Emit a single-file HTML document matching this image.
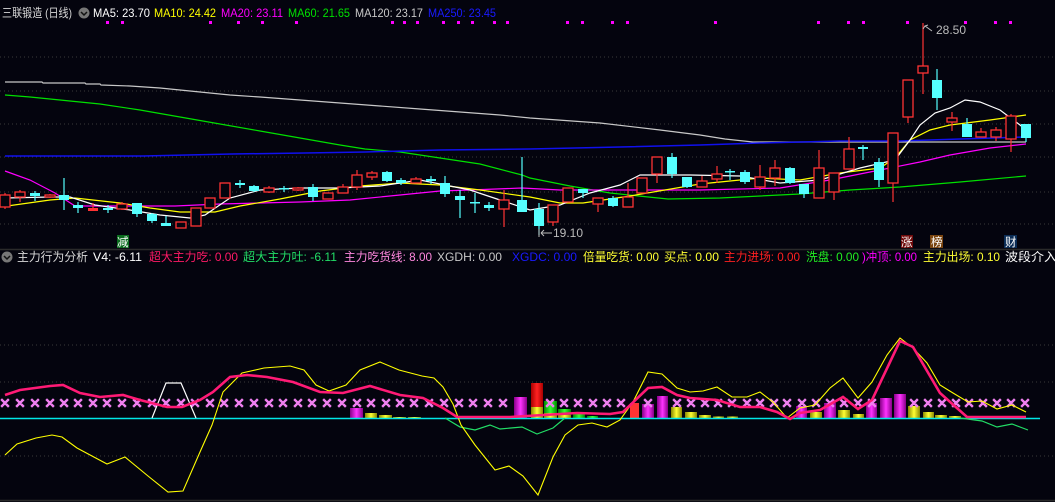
<!DOCTYPE html>
<html><head><meta charset="utf-8"><style>
html,body{margin:0;padding:0;background:#04040e;}
svg{display:block}
text{font-family:"Liberation Sans","Noto Sans CJK SC",sans-serif;font-size:12px}
</style></head><body>
<svg width="1055" height="502" viewBox="0 0 1055 502" xmlns="http://www.w3.org/2000/svg">
<rect width="1055" height="502" fill="#04040e"/>
<!-- grid -->
<g stroke="#3a3a3a" stroke-dasharray="1,3" stroke-width="1">
<line x1="0" y1="57" x2="1055" y2="57"/><line x1="0" y1="91" x2="1055" y2="91"/><line x1="0" y1="124" x2="1055" y2="124"/>
<line x1="0" y1="157" x2="1055" y2="157"/><line x1="0" y1="192" x2="1055" y2="192"/><line x1="0" y1="224" x2="1055" y2="224"/>
<line x1="0" y1="345" x2="1055" y2="345"/><line x1="0" y1="382" x2="1055" y2="382"/><line x1="0" y1="456" x2="1055" y2="456"/>
</g>
<line x1="0" y1="249.5" x2="1055" y2="249.5" stroke="#2a2a2a" stroke-width="1.5"/>
<line x1="0" y1="500.5" x2="1055" y2="500.5" stroke="#2a2a2a" stroke-width="1.5"/>

<!-- header -->
<text x="2" y="17" fill="#d8d8d8" textLength="70" lengthAdjust="spacingAndGlyphs">三联锻造 (日线)</text>
<circle cx="84" cy="13" r="5.5" fill="#777"/><path d="M81 12 L84 15 L87 12" stroke="#111" stroke-width="1.5" fill="none"/>
<text x="93" y="17" fill="#ffffff" textLength="57" lengthAdjust="spacingAndGlyphs">MA5: 23.70</text>
<text x="154" y="17" fill="#ffff00" textLength="62" lengthAdjust="spacingAndGlyphs">MA10: 24.42</text>
<text x="221" y="17" fill="#ff00ff" textLength="62" lengthAdjust="spacingAndGlyphs">MA20: 23.11</text>
<text x="288" y="17" fill="#00e000" textLength="62" lengthAdjust="spacingAndGlyphs">MA60: 21.65</text>
<text x="355" y="17" fill="#c8c8c8" textLength="68" lengthAdjust="spacingAndGlyphs">MA120: 23.17</text>
<text x="428" y="17" fill="#1a1aff" textLength="68" lengthAdjust="spacingAndGlyphs">MA250: 23.45</text>

<!-- magenta dots -->
<g fill="#ff00ff">
<rect x="106" y="21" width="3" height="3"/><rect x="121" y="21" width="3" height="3"/><rect x="209" y="21" width="3" height="3"/><rect x="237" y="21" width="3" height="3"/><rect x="261" y="21" width="3" height="3"/><rect x="295" y="21" width="3" height="3"/><rect x="391" y="21" width="3" height="3"/><rect x="403" y="21" width="3" height="3"/><rect x="416" y="21" width="3" height="3"/><rect x="442" y="21" width="3" height="3"/><rect x="457" y="21" width="3" height="3"/><rect x="471" y="21" width="3" height="3"/><rect x="493" y="21" width="3" height="3"/><rect x="506" y="21" width="3" height="3"/><rect x="566" y="21" width="3" height="3"/><rect x="581" y="21" width="3" height="3"/><rect x="611" y="21" width="3" height="3"/><rect x="626" y="21" width="3" height="3"/><rect x="714" y="21" width="3" height="3"/><rect x="817" y="21" width="3" height="3"/><rect x="847" y="21" width="3" height="3"/><rect x="862" y="21" width="3" height="3"/><rect x="906" y="21" width="3" height="3"/><rect x="964" y="21" width="3" height="3"/><rect x="994" y="21" width="3" height="3"/><rect x="1009" y="21" width="3" height="3"/>
</g>

<!-- MA lines -->
<g fill="none" stroke-width="1.2">
<polyline stroke="#c8c8c8" points="5,82 42,82 43,83 85,83 86,84 100,84 101,85 130,86 160,88 180,90 200,92 230,95 260,97 300,100 340,103 380,106 420,109 460,112 500,115 530,118 600,123 660,130 700,135 725,139 753,142 1026,142"/>
<polyline stroke="#00e000" points="5,95 30,97 60,100 100,104 140,110 180,117 220,124 260,131 300,138 340,145 365,149 400,152 440,158 480,164 522,175 530,178 570,186 610,193 668,199 720,198 800,194 850,190 900,187 960,182 1026,176"/>
<polyline stroke="#1010ee" stroke-width="1.5" points="5,156 143,156 232,154 305,153 365,152 440,150 530,149 620,147 700,145 760,143 840,141 900,141 960,139 1026,137"/>
<polyline stroke="#ff00ff" points="5,171 30,180 55,193 75,206 175,206 220,204 260,203 300,202 350,200 400,195 440,191 470,190 522,188 560,190 620,190 700,190 780,188 830,180 880,170 920,162 950,155 990,148 1026,144"/>
<polyline stroke="#ffff00" points="0,207 50,200 75,198 120,203 150,208 180,212 215,212 240,206 280,199 320,191 360,186 400,183 440,185 480,190 530,197 560,203 583,203 630,196 700,184 760,178 800,180 840,173 880,168 895,158 910,140 930,130 950,125 990,120 1026,115"/>
<polyline stroke="#ffffff" points="5,198 50,197 70,197 95,205 130,210 160,215 190,218 205,215 230,198 260,190 300,188 340,188 380,186 420,180 470,190 500,200 530,210 560,205 590,193 620,185 640,175 690,175 740,176 780,183 820,180 860,168 895,160 910,140 920,125 935,113 950,108 965,100 980,102 1000,110 1020,125 1026,130"/>
</g>

<!-- candles: wicks -->
<g stroke-width="1.2">
<g stroke="#ff3333">
<line x1="5" y1="193" x2="5" y2="209"/><line x1="20" y1="190" x2="20" y2="202"/><line x1="50" y1="194" x2="50" y2="198"/><line x1="93" y1="203" x2="93" y2="211"/><line x1="122" y1="202" x2="122" y2="210"/><line x1="269" y1="186" x2="269" y2="193"/><line x1="298" y1="187" x2="298" y2="191"/><line x1="343" y1="184" x2="343" y2="193"/><line x1="357" y1="170" x2="357" y2="190"/><line x1="372" y1="171" x2="372" y2="180"/><line x1="416" y1="177" x2="416" y2="183"/><line x1="504" y1="190" x2="504" y2="227"/><line x1="553" y1="205" x2="553" y2="226"/><line x1="598" y1="198" x2="598" y2="212"/><line x1="628" y1="183" x2="628" y2="207"/><line x1="657" y1="157" x2="657" y2="183"/><line x1="702" y1="176" x2="702" y2="187"/><line x1="717" y1="166" x2="717" y2="183"/><line x1="760" y1="165" x2="760" y2="190"/><line x1="775" y1="160" x2="775" y2="186"/><line x1="819" y1="150" x2="819" y2="198"/><line x1="834" y1="173" x2="834" y2="200"/><line x1="849" y1="137" x2="849" y2="169"/><line x1="893" y1="133" x2="893" y2="202"/><line x1="908" y1="80" x2="908" y2="123"/><line x1="923" y1="23" x2="923" y2="94"/><line x1="952" y1="112" x2="952" y2="131"/><line x1="981" y1="128" x2="981" y2="137"/><line x1="996" y1="127" x2="996" y2="141"/><line x1="1011" y1="114" x2="1011" y2="152"/>
</g>
<g stroke="#55ffff">
<line x1="35" y1="191" x2="35" y2="201"/><line x1="64" y1="178" x2="64" y2="210"/><line x1="78" y1="202" x2="78" y2="213"/><line x1="108" y1="205" x2="108" y2="213"/><line x1="137" y1="203" x2="137" y2="217"/><line x1="152" y1="213" x2="152" y2="223"/><line x1="166" y1="216" x2="166" y2="226"/><line x1="240" y1="180" x2="240" y2="188"/><line x1="254" y1="185" x2="254" y2="192"/><line x1="284" y1="186" x2="284" y2="192"/><line x1="313" y1="184" x2="313" y2="201"/><line x1="387" y1="171" x2="387" y2="182"/><line x1="401" y1="178" x2="401" y2="185"/><line x1="431" y1="176" x2="431" y2="184"/><line x1="445" y1="176" x2="445" y2="197"/><line x1="460" y1="190" x2="460" y2="218"/><line x1="475" y1="193" x2="475" y2="213"/><line x1="489" y1="202" x2="489" y2="211"/><line x1="522" y1="157" x2="522" y2="212"/><line x1="539" y1="203" x2="539" y2="235"/><line x1="583" y1="189" x2="583" y2="198"/><line x1="613" y1="196" x2="613" y2="207"/><line x1="672" y1="153" x2="672" y2="178"/><line x1="687" y1="177" x2="687" y2="188"/><line x1="730" y1="169" x2="730" y2="180"/><line x1="745" y1="170" x2="745" y2="184"/><line x1="790" y1="167" x2="790" y2="184"/><line x1="804" y1="184" x2="804" y2="198"/><line x1="863" y1="145" x2="863" y2="160"/><line x1="879" y1="158" x2="879" y2="187"/><line x1="937" y1="69" x2="937" y2="110"/><line x1="967" y1="118" x2="967" y2="137"/><line x1="1026" y1="124" x2="1026" y2="142"/>
</g>
</g>
<!-- candle bodies red hollow -->
<g fill="#04040e" stroke="#ff3333" stroke-width="1.3">
<rect x="0" y="195" width="10" height="12"/><rect x="15" y="192" width="10" height="5"/><rect x="45" y="195" width="10" height="2"/><rect x="117" y="204" width="10" height="5"/><rect x="176" y="222" width="10" height="6"/><rect x="191" y="208" width="10" height="18"/><rect x="205" y="198" width="10" height="10"/><rect x="220" y="183" width="10" height="15"/><rect x="264" y="188" width="10" height="4"/><rect x="293" y="188" width="10" height="2"/><rect x="323" y="193" width="10" height="6"/><rect x="338" y="187" width="10" height="6"/><rect x="352" y="175" width="10" height="12"/><rect x="367" y="173" width="10" height="4"/><rect x="411" y="179" width="10" height="4"/><rect x="499" y="200" width="10" height="9"/><rect x="548" y="205" width="10" height="17"/><rect x="563" y="188" width="10" height="14"/><rect x="593" y="198" width="10" height="6"/><rect x="623" y="197" width="10" height="10"/><rect x="637" y="178" width="10" height="15"/><rect x="652" y="157" width="10" height="17"/><rect x="697" y="181" width="10" height="6"/><rect x="712" y="174" width="10" height="5"/><rect x="755" y="177" width="10" height="10"/><rect x="770" y="168" width="10" height="10"/><rect x="814" y="168" width="10" height="30"/><rect x="829" y="173" width="10" height="19"/><rect x="844" y="149" width="10" height="20"/><rect x="888" y="133" width="10" height="50"/><rect x="903" y="80" width="10" height="37"/><rect x="918" y="66" width="10" height="7"/><rect x="947" y="118" width="10" height="4"/><rect x="976" y="132" width="10" height="5"/><rect x="991" y="130" width="10" height="7"/><rect x="1006" y="116" width="10" height="23"/>
</g>
<rect x="88" y="208" width="10" height="3" fill="#ff3333"/>
<!-- cyan bodies -->
<g fill="#55ffff">
<rect x="30" y="193" width="10" height="3"/><rect x="59" y="195" width="10" height="5"/><rect x="73" y="205" width="10" height="3"/><rect x="103" y="208" width="10" height="2"/><rect x="132" y="203" width="10" height="11"/><rect x="147" y="214" width="10" height="7"/><rect x="161" y="223" width="10" height="3"/><rect x="235" y="183" width="10" height="2"/><rect x="249" y="186" width="10" height="5"/><rect x="279" y="188" width="10" height="1.5"/><rect x="308" y="187" width="10" height="10"/><rect x="382" y="172" width="10" height="9"/><rect x="396" y="180" width="10" height="3"/><rect x="426" y="179" width="10" height="2"/><rect x="440" y="183" width="10" height="11"/><rect x="455" y="196" width="10" height="4"/><rect x="470" y="202" width="10" height="1.5"/><rect x="484" y="205" width="10" height="3"/><rect x="517" y="200" width="10" height="12"/><rect x="534" y="209" width="10" height="17"/><rect x="578" y="189" width="10" height="4"/><rect x="608" y="198" width="10" height="8"/><rect x="667" y="157" width="10" height="17"/><rect x="682" y="177" width="10" height="10"/><rect x="725" y="171" width="10" height="1.5"/><rect x="740" y="172" width="10" height="10"/><rect x="785" y="168" width="10" height="15"/><rect x="799" y="184" width="10" height="10"/><rect x="858" y="147" width="10" height="2"/><rect x="874" y="162" width="10" height="18"/><rect x="932" y="80" width="10" height="18"/><rect x="962" y="124" width="10" height="13"/><rect x="1021" y="124" width="10" height="14"/>
</g>

<!-- price labels -->
<path d="M932 31 L925 26 L923 29 M925 26 L928 25" stroke="#bbb" fill="none" stroke-width="1"/>
<text x="936" y="34" fill="#bbbbbb">28.50</text>
<path d="M552 233 L541 233 M541 233 L544 230 M541 233 L544 236 M539 229 L539 237" stroke="#bbb" fill="none" stroke-width="1"/>
<text x="553" y="237" fill="#bbbbbb">19.10</text>

<!-- markers -->
<rect x="117" y="235" width="12" height="13" fill="#0b6b1e"/><text x="117" y="246" fill="#fff" style="font-size:11.5px">减</text>
<rect x="901" y="235" width="12" height="13" fill="#6e0a0a"/><text x="901" y="246" fill="#fff" style="font-size:11.5px">涨</text>
<rect x="930" y="235" width="13" height="13" fill="#7a4510"/><text x="931" y="246" fill="#fff" style="font-size:11.5px">榜</text>
<rect x="1004" y="235" width="13" height="13" fill="#0a2c55"/><text x="1005" y="246" fill="#fff" style="font-size:11.5px">财</text>

<!-- lower header -->
<circle cx="7" cy="257" r="5.5" fill="#777"/><path d="M4 256 L7 259 L10 256" stroke="#111" stroke-width="1.5" fill="none"/>
<text x="17" y="261" fill="#d8d8d8" textLength="71" lengthAdjust="spacingAndGlyphs">主力行为分析</text>
<text x="93" y="261" fill="#ffffff" textLength="49" lengthAdjust="spacingAndGlyphs">V4: -6.11</text>
<text x="149" y="261" fill="#ff1a66" textLength="89" lengthAdjust="spacingAndGlyphs">超大主力吃: 0.00</text>
<text x="243" y="261" fill="#22dd66" textLength="94" lengthAdjust="spacingAndGlyphs">超大主力吐: -6.11</text>
<text x="344" y="261" fill="#ff88dd" textLength="88" lengthAdjust="spacingAndGlyphs">主力吃货线: 8.00</text>
<text x="437" y="261" fill="#c8c8c8" textLength="65" lengthAdjust="spacingAndGlyphs">XGDH: 0.00</text>
<text x="512" y="261" fill="#1a1aff" textLength="65" lengthAdjust="spacingAndGlyphs">XGDC: 0.00</text>
<text x="583" y="261" fill="#ffff33" textLength="76" lengthAdjust="spacingAndGlyphs">倍量吃货: 0.00</text>
<text x="664" y="261" fill="#ffff33" textLength="55" lengthAdjust="spacingAndGlyphs">买点: 0.00</text>
<text x="724" y="261" fill="#ff2020" textLength="76" lengthAdjust="spacingAndGlyphs">主力进场: 0.00</text>
<text x="806" y="261" fill="#22ee22" textLength="53" lengthAdjust="spacingAndGlyphs">洗盘: 0.00</text>
<text x="862" y="261" fill="#ff00ff" textLength="55" lengthAdjust="spacingAndGlyphs">)冲顶: 0.00</text>
<text x="923" y="261" fill="#ffff33" textLength="77" lengthAdjust="spacingAndGlyphs">主力出场: 0.10</text>
<text x="1005" y="261" fill="#ffffff" textLength="52" lengthAdjust="spacingAndGlyphs">波段介入</text>

<!-- bars -->
<defs>
<linearGradient id="gm" x1="0" x2="1"><stop offset="0" stop-color="#880088"/><stop offset="0.5" stop-color="#ff33ff"/><stop offset="1" stop-color="#880088"/></linearGradient>
<linearGradient id="gy" x1="0" x2="1"><stop offset="0" stop-color="#888800"/><stop offset="0.5" stop-color="#ffff33"/><stop offset="1" stop-color="#888800"/></linearGradient>
<linearGradient id="gr" x1="0" x2="1"><stop offset="0" stop-color="#aa0000"/><stop offset="0.5" stop-color="#ff2222"/><stop offset="1" stop-color="#aa0000"/></linearGradient>
<linearGradient id="gg" x1="0" x2="1"><stop offset="0" stop-color="#008800"/><stop offset="0.5" stop-color="#33ff33"/><stop offset="1" stop-color="#008800"/></linearGradient>
</defs>
<g>
<rect x="350" y="408" width="13" height="10" fill="url(#gm)"/>
<rect x="365" y="413" width="12" height="5" fill="url(#gy)"/><rect x="379" y="415" width="13" height="3" fill="url(#gy)"/><rect x="393" y="417" width="13" height="1.5" fill="url(#gy)"/><rect x="408" y="417" width="13" height="1.5" fill="url(#gy)"/>
<rect x="514" y="397" width="13" height="21" fill="url(#gm)"/>
<rect x="531" y="383" width="12" height="24" fill="url(#gr)"/><rect x="531" y="407" width="12" height="11" fill="url(#gy)"/>
<rect x="544" y="401" width="13" height="12" fill="url(#gg)"/><rect x="544" y="413" width="13" height="5" fill="url(#gy)"/>
<rect x="558" y="409" width="13" height="6" fill="url(#gg)"/><rect x="558" y="415" width="13" height="3" fill="url(#gy)"/>
<rect x="573" y="413" width="12" height="5" fill="url(#gg)"/><rect x="587" y="416" width="11" height="2" fill="url(#gg)"/>
<rect x="630" y="403" width="9" height="15" fill="#ff3333"/>
<rect x="642" y="404" width="12" height="14" fill="url(#gm)"/><rect x="657" y="396" width="11" height="22" fill="url(#gm)"/>
<rect x="671" y="407" width="11" height="11" fill="url(#gy)"/><rect x="685" y="412" width="12" height="6" fill="url(#gy)"/><rect x="699" y="415" width="12" height="3" fill="url(#gy)"/><rect x="713" y="416.5" width="11" height="1.5" fill="url(#gy)"/><rect x="727" y="416.5" width="11" height="1.5" fill="url(#gy)"/>
<rect x="796" y="406" width="11" height="12" fill="url(#gm)"/><rect x="810" y="412" width="12" height="6" fill="url(#gy)"/><rect x="824" y="403" width="12" height="15" fill="url(#gm)"/><rect x="838" y="410" width="12" height="8" fill="url(#gy)"/><rect x="853" y="414" width="11" height="4" fill="url(#gy)"/><rect x="866" y="403" width="11" height="15" fill="url(#gm)"/><rect x="880" y="398" width="12" height="20" fill="url(#gm)"/><rect x="894" y="394" width="12" height="24" fill="url(#gm)"/><rect x="908" y="406" width="12" height="12" fill="url(#gy)"/><rect x="923" y="412" width="11" height="6" fill="url(#gy)"/><rect x="935" y="415" width="12" height="3" fill="url(#gy)"/><rect x="949" y="416" width="12" height="2" fill="url(#gy)"/>
</g>

<!-- crosses -->
<g stroke="#f080f0" stroke-width="2.4" stroke-linecap="square">
<path d="M2 400l6 6m0-6l-6 6M17 400l6 6m0-6l-6 6M32 400l6 6m0-6l-6 6M47 400l6 6m0-6l-6 6M61 400l6 6m0-6l-6 6M75 400l6 6m0-6l-6 6M90 400l6 6m0-6l-6 6M104 400l6 6m0-6l-6 6M119 400l6 6m0-6l-6 6M134 400l6 6m0-6l-6 6M149 400l6 6m0-6l-6 6M163 400l6 6m0-6l-6 6M178 400l6 6m0-6l-6 6M192 400l6 6m0-6l-6 6M207 400l6 6m0-6l-6 6M221 400l6 6m0-6l-6 6M236 400l6 6m0-6l-6 6M251 400l6 6m0-6l-6 6M266 400l6 6m0-6l-6 6M280 400l6 6m0-6l-6 6M295 400l6 6m0-6l-6 6M309 400l6 6m0-6l-6 6M324 400l6 6m0-6l-6 6M339 400l6 6m0-6l-6 6M354 400l6 6m0-6l-6 6M368 400l6 6m0-6l-6 6M383 400l6 6m0-6l-6 6M397 400l6 6m0-6l-6 6M411 400l6 6m0-6l-6 6M426 400l6 6m0-6l-6 6M441 400l6 6m0-6l-6 6M456 400l6 6m0-6l-6 6M470 400l6 6m0-6l-6 6M485 400l6 6m0-6l-6 6M500 400l6 6m0-6l-6 6M547 400l6 6m0-6l-6 6M561 400l6 6m0-6l-6 6M575 400l6 6m0-6l-6 6M590 400l6 6m0-6l-6 6M604 400l6 6m0-6l-6 6M618 400l6 6m0-6l-6 6M645 400l6 6m0-6l-6 6M674 400l6 6m0-6l-6 6M688 400l6 6m0-6l-6 6M702 400l6 6m0-6l-6 6M715 400l6 6m0-6l-6 6M729 400l6 6m0-6l-6 6M744 400l6 6m0-6l-6 6M757 400l6 6m0-6l-6 6M771 400l6 6m0-6l-6 6M784 400l6 6m0-6l-6 6M799 400l6 6m0-6l-6 6M813 400l6 6m0-6l-6 6M827 400l6 6m0-6l-6 6M841 400l6 6m0-6l-6 6M855 400l6 6m0-6l-6 6M869 400l6 6m0-6l-6 6M911 400l6 6m0-6l-6 6M925 400l6 6m0-6l-6 6M939 400l6 6m0-6l-6 6M953 400l6 6m0-6l-6 6M966 400l6 6m0-6l-6 6M980 400l6 6m0-6l-6 6M994 400l6 6m0-6l-6 6M1008 400l6 6m0-6l-6 6M1022 400l6 6m0-6l-6 6"/>
</g>

<!-- baseline -->
<line x1="0" y1="418.5" x2="1040" y2="418.5" stroke="#00e8e8" stroke-width="1.5"/>

<!-- lower lines -->
<polyline fill="none" stroke="#ffffff" stroke-width="1.2" points="152,418 166,383 181,383 196,418"/>
<polyline fill="none" stroke="#22dd66" stroke-width="1.2" points="445,418 460,427 475,430 490,425 500,429 522,427 537,434 553,428 565,418"/>
<polyline fill="none" stroke="#22dd66" stroke-width="1.2" points="960,418 982,421 997,427 1012,424 1028,430"/>
<polyline fill="none" stroke="#ffff00" stroke-width="1.1" points="5,455 17,444 36,438 52,435 62,437 77,448 107,464 125,457 148,476 168,492 183,491 200,452 212,425 223,392 242,373 264,368 290,366 304,370 316,385 329,391 346,385 360,370 380,362 399,370 422,376 434,378 443,387 453,404 461,425 475,445 495,470 509,466 523,476 538,495 553,457 565,435 578,425 592,423 607,427 620,420 633,402 648,372 662,374 677,388 690,392 703,391 717,387 732,397 747,397 760,392 773,402 787,418 800,408 815,405 830,388 843,378 858,398 872,382 887,355 900,338 913,348 927,363 940,385 953,393 968,402 982,401 997,409 1012,405 1026,412"/>
<polyline fill="none" stroke="#ff1a75" stroke-width="2.6" points="5,395 20,390 50,386 63,385 80,393 100,397 123,395 140,400 167,407 182,407 200,400 213,392 230,377 247,375 267,377 293,382 320,392 343,393 370,386 400,395 423,398 443,408 457,417 510,417 577,413 610,414 623,412 648,388 662,387 677,395 690,398 717,400 740,407 760,407 777,412 790,419 800,413 820,410 843,397 858,409 872,400 900,341 913,347 940,393 967,417 1026,417"/>
</svg>
</body></html>
